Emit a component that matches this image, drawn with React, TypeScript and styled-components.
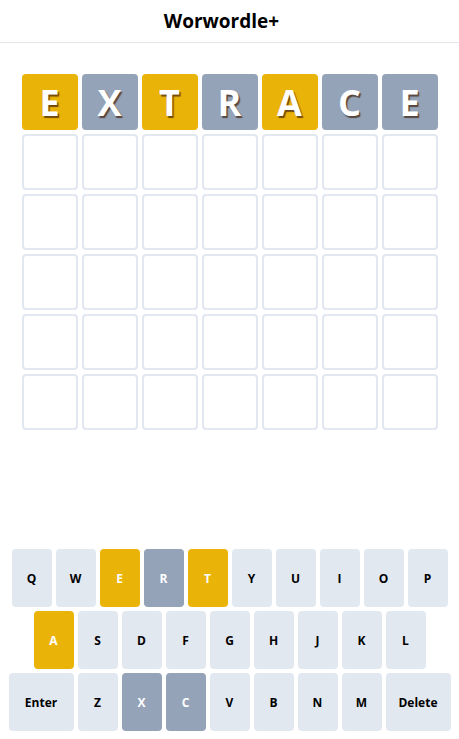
import React from 'react';
import styled, { createGlobalStyle } from 'styled-components';

type Status = 'present' | 'absent' | 'empty';

const GlobalStyle = createGlobalStyle`
  html, body {
    margin: 0;
    padding: 0;
    background: #ffffff;
    font-family: 'Open Sans', 'Noto Sans', sans-serif;
  }
`;

const guess: { letter: string; status: Status }[] = [
  { letter: 'E', status: 'present' },
  { letter: 'X', status: 'absent' },
  { letter: 'T', status: 'present' },
  { letter: 'R', status: 'absent' },
  { letter: 'A', status: 'present' },
  { letter: 'C', status: 'absent' },
  { letter: 'E', status: 'absent' },
];

const keyStatus: Record<string, Status> = {
  E: 'present',
  T: 'present',
  A: 'present',
  R: 'absent',
  X: 'absent',
  C: 'absent',
};

const rows = [
  ['Q', 'W', 'E', 'R', 'T', 'Y', 'U', 'I', 'O', 'P'],
  ['A', 'S', 'D', 'F', 'G', 'H', 'J', 'K', 'L'],
  ['Enter', 'Z', 'X', 'C', 'V', 'B', 'N', 'M', 'Delete'],
];

const colors: Record<Status, string> = {
  present: '#eab308',
  absent: '#94a3b8',
  empty: '#e2e8f0',
};

const App = () => {
  return (
    <Page>
      <GlobalStyle />
      <Header>
        <Title>Worwordle+</Title>
      </Header>
      <Board>
        {guess.map((g, i) => (
          <Tile key={`g${i}`} $status={g.status}>
            {g.letter}
          </Tile>
        ))}
        {Array.from({ length: 35 }).map((_, i) => (
          <Tile key={`e${i}`} $status="empty" />
        ))}
      </Board>
      <Keyboard>
        {rows.map((row, r) => (
          <KeyRow key={r}>
            {row.map((k) => (
              <Key key={k} $wide={k.length > 1} $status={keyStatus[k] || 'empty'}>
                {k}
              </Key>
            ))}
          </KeyRow>
        ))}
      </Keyboard>
    </Page>
  );
};

export default App;

const Page = styled.div`
  min-height: 100vh;
  display: flex;
  flex-direction: column;
  box-sizing: border-box;
  padding-bottom: 8px;
`;

const Header = styled.header`
  height: 42px;
  display: flex;
  justify-content: center;
  align-items: center;
  padding-right: 16px;
  border-bottom: 1px solid #e5e7eb;
`;

const Title = styled.h1`
  margin: 0;
  font-size: 19px;
  font-weight: 700;
  color: #000000;
`;

const Board = styled.div`
  display: grid;
  grid-template-columns: repeat(7, 56px);
  grid-auto-rows: 56px;
  gap: 4px;
  justify-content: center;
  margin-top: 31px;
`;

const Tile = styled.div<{ $status: Status }>`
  box-sizing: border-box;
  display: flex;
  justify-content: center;
  align-items: center;
  border-radius: 4px;
  border: 2px solid ${({ $status }) => colors[$status]};
  background-color: ${({ $status }) => ($status === 'empty' ? '#ffffff' : colors[$status])};
  color: #ffffff;
  font-size: 36px;
  font-weight: 700;
  text-shadow: 1.5px 1.5px 1px rgba(60, 30, 10, 0.7);
`;

const Keyboard = styled.div`
  margin-top: auto;
  display: flex;
  flex-direction: column;
  gap: 4px;
`;

const KeyRow = styled.div`
  display: flex;
  justify-content: center;
  gap: 4px;
`;

const Key = styled.button<{ $wide: boolean; $status: Status }>`
  width: ${({ $wide }) => ($wide ? '65px' : '40px')};
  height: 58px;
  padding: 0;
  border: none;
  border-radius: 4px;
  background-color: ${({ $status }) => colors[$status]};
  color: ${({ $status }) => ($status === 'empty' ? '#000000' : '#ffffff')};
  font-family: 'Open Sans', 'Noto Sans', sans-serif;
  font-size: 12px;
  font-weight: 700;
  cursor: pointer;
`;
